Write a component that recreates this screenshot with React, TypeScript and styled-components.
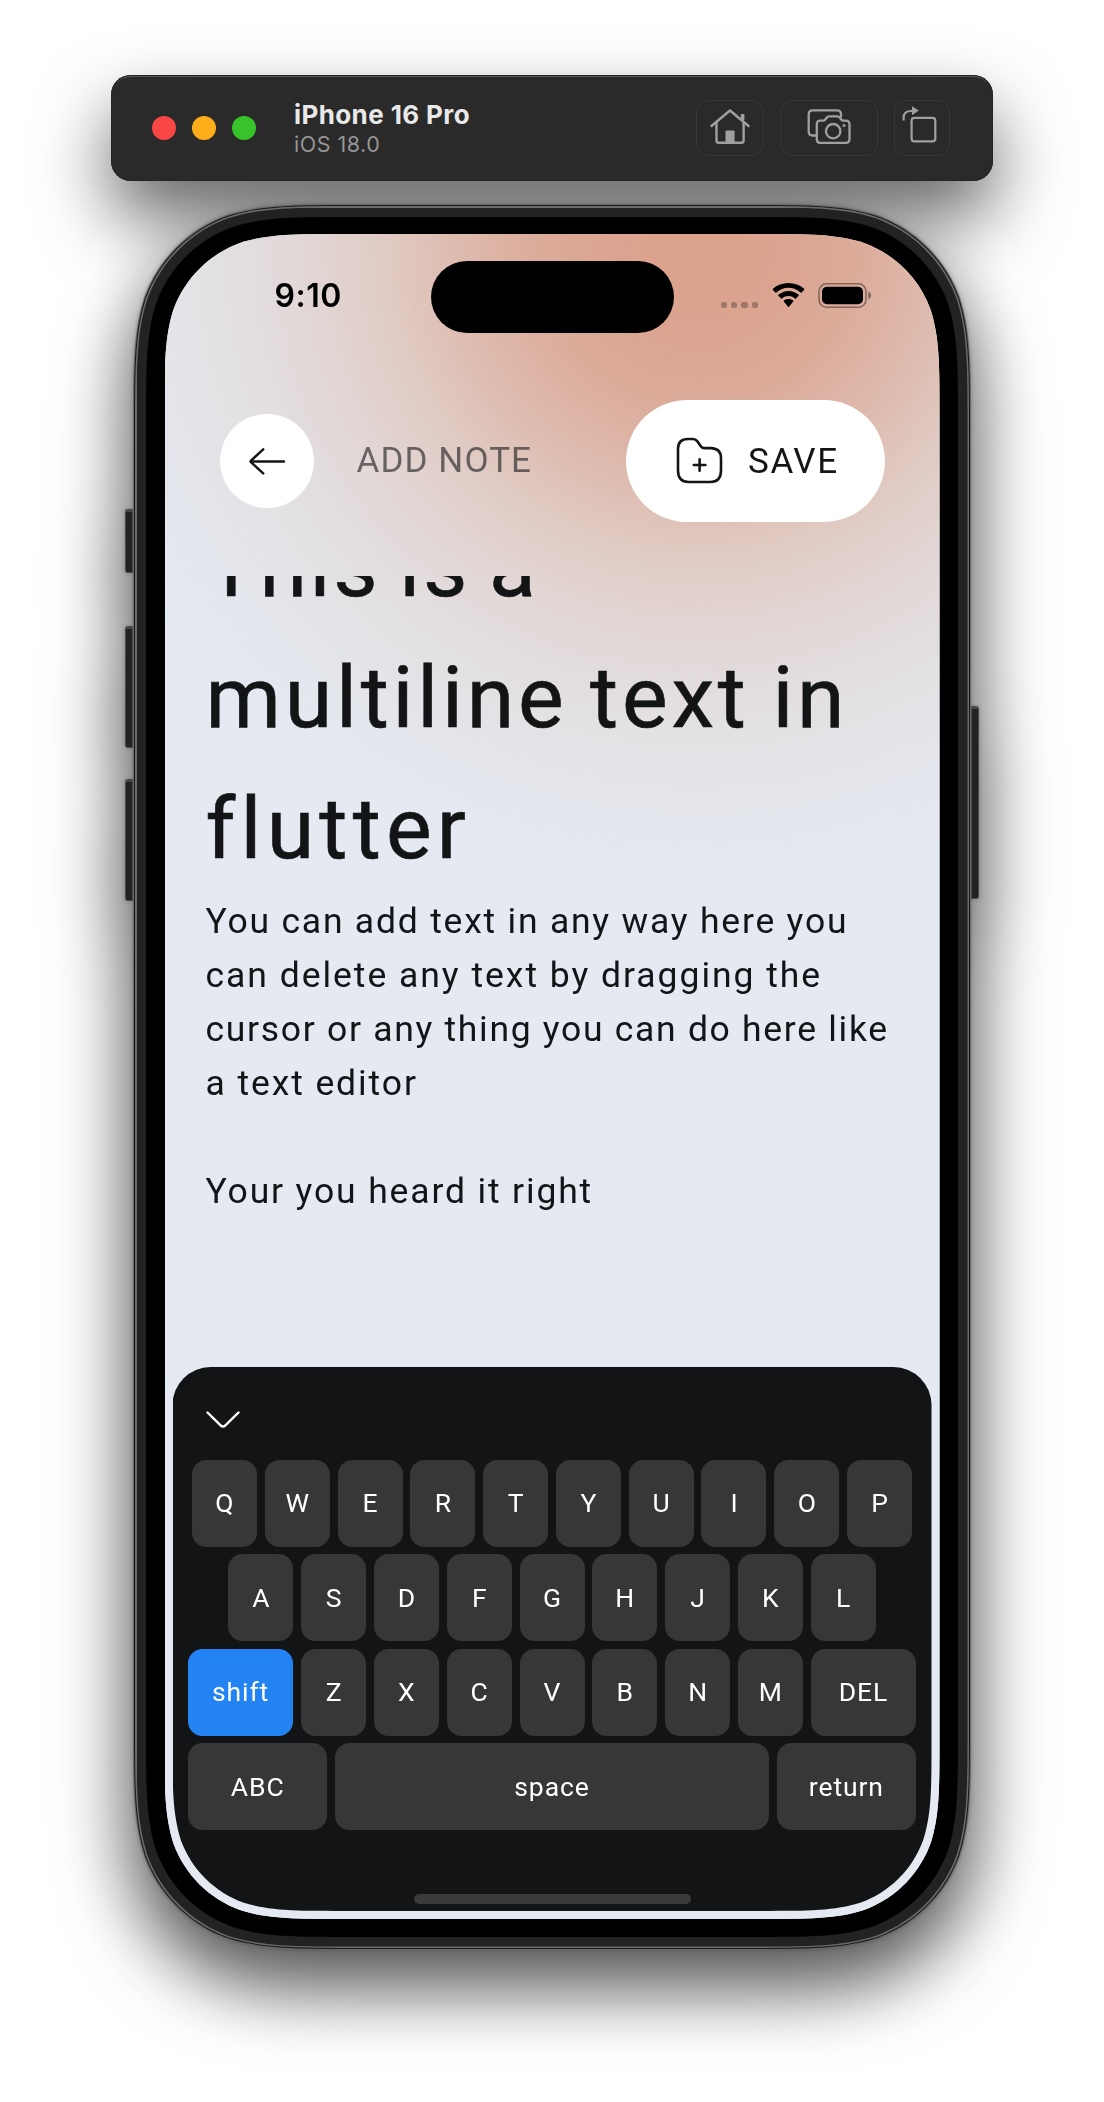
import React from "react";
import styled, { createGlobalStyle } from "styled-components";

const GlobalStyle = createGlobalStyle`
  *, *::before, *::after { box-sizing: border-box; }
  html, body { margin: 0; background: #fff; }
  body { font-family: Roboto, "Liberation Sans", sans-serif; overflow: hidden; }
  button { font: inherit; color: inherit; border: 0; padding: 0; margin: 0; background: none; }
`;

/* Outline with continuous-curvature corners; the top pair may be plain arcs. */
function smoothRect(w: number, h: number, r: number, topArc?: number) {
  const a = 1.528665 * r;
  const b = 1.088493 * r;
  const c = 0.868407 * r;
  const d = 0.631494 * r;
  const e = 0.074911 * r;
  const f = 0.372824 * r;
  const g = 0.16906 * r;
  const top = topArc
    ? `M${topArc} 0 L${w - topArc} 0 A${topArc} ${topArc} 0 0 1 ${w} ${topArc}`
    : `M${a} 0 L${w - a} 0 C${w - b} 0 ${w - c} 0 ${w - d} ${e} C${w - f} ${g} ${w - g} ${f} ${w - e} ${d} C${w} ${c} ${w} ${b} ${w} ${a}`;
  const bottom =
    `L${w} ${h - a} C${w} ${h - b} ${w} ${h - c} ${w - e} ${h - d} C${w - g} ${h - f} ${w - f} ${h - g} ${w - d} ${h - e} C${w - c} ${h} ${w - b} ${h} ${w - a} ${h}` +
    `L${a} ${h} C${b} ${h} ${c} ${h} ${d} ${h - e} C${f} ${h - g} ${g} ${h - f} ${e} ${h - d} C0 ${h - c} 0 ${h - b} 0 ${h - a}`;
  const left = topArc
    ? `L0 ${topArc} A${topArc} ${topArc} 0 0 1 ${topArc} 0 Z`
    : `L0 ${a} C0 ${b} 0 ${c} ${e} ${d} C${g} ${f} ${f} ${g} ${d} ${e} C${c} 0 ${b} 0 ${a} 0 Z`;
  return `path("${top} ${bottom} ${left}")`;
}

const Page = styled.main`
  width: 1104px;
  height: 2102px;
  padding-top: 75px;
  display: flex;
  flex-direction: column;
  align-items: center;
  background: #fff;
`;

/* The shadow stays beneath the device while the bar itself sits above the device's shadow. */
const TitleBarShadow = styled.div`
  width: 882px;
  border-radius: 20px;
  box-shadow: 0 36px 72px rgba(0, 0, 0, 0.6);
`;

const TitleBar = styled.header`
  position: relative;
  z-index: 1;
  height: 106px;
  padding: 0 43px 0 41px;
  display: flex;
  align-items: center;
  border-radius: 20px;
  background: #2a2a2a;
  box-shadow: inset 0 0 0 1px #242424, inset 0 3px 0 -1px #565656;
`;

const Lights = styled.div`
  display: flex;
  gap: 16px;
`;

const Light = styled.span<{ $color: string }>`
  width: 24px;
  height: 24px;
  border-radius: 50%;
  background: ${(p) => p.$color};
`;

const DeviceInfo = styled.div`
  margin-left: 38px;
  flex: 1;
  font-family: Inter, sans-serif;
`;

const DeviceName = styled.div`
  font-size: 26px;
  line-height: 32px;
  font-weight: 700;
  letter-spacing: 0.4px;
  color: #e9e9e9;
`;

const DeviceOs = styled.div`
  font-size: 21.5px;
  line-height: 26px;
  letter-spacing: 0.5px;
  color: #949494;
`;

const Tools = styled.div`
  display: flex;
  gap: 16px;
`;

const Tool = styled.button<{ $width: number }>`
  width: ${(p) => p.$width}px;
  height: 56px;
  display: grid;
  place-items: center;
  border: 1.5px solid #373737;
  border-radius: 12px;
`;

const Device = styled.section`
  margin-top: 23px;
  display: grid;
  grid-template-columns: 9px 838px 9px;
  filter: drop-shadow(0 34px 38px rgba(0, 0, 0, 0.62)) drop-shadow(0 0 2px rgba(0, 0, 0, 0.3));
`;

const Side = styled.div<{ $top: number }>`
  padding-top: ${(p) => p.$top}px;
  display: flex;
  flex-direction: column;
`;

const HardwareButton = styled.span<{ $height: number; $gap?: number; $right?: boolean }>`
  height: ${(p) => p.$height}px;
  width: 8px;
  margin-left: ${(p) => (p.$right ? 0 : 1)}px;
  margin-bottom: ${(p) => p.$gap ?? 0}px;
  background: #222;
  border: 1px solid #4a4a4a;
  border-top: 3px solid #484848;
  border-radius: ${(p) => (p.$right ? "0 3px 3px 0" : "3px 0 0 3px")};
`;

const Rim = styled.div`
  height: 1746px;
  padding: 1px;
  background: #686868;
  clip-path: ${smoothRect(838, 1746, 148)};
`;

const RimLine = styled.div`
  height: 1744px;
  padding: 1px;
  background: #191919;
  clip-path: ${smoothRect(836, 1744, 147)};
`;

const RimShine = styled.div`
  height: 1742px;
  padding: 1.5px;
  background: #6b6b6b;
  clip-path: ${smoothRect(834, 1742, 146)};
`;

const Band = styled.div`
  height: 1739px;
  padding: 9.5px 9.5px;
  background: #222;
  clip-path: ${smoothRect(831, 1739, 145)};
`;

const Bezel = styled.div`
  height: 1720px;
  padding: 17px 18px 18px 18.5px;
  background: #000;
  clip-path: ${smoothRect(812, 1720, 136)};
`;

const Screen = styled.div`
  height: 1685px;
  width: 775px;
  display: flex;
  flex-direction: column;
  clip-path: ${smoothRect(775, 1685, 119.5)};
  background: radial-gradient(
      circle 655px at 533px 10px,
      #dba28c 0%,
      #dba490 13%,
      #dcac9b 25%,
      #debbaf 37%,
      #e0cbc4 48%,
      #e2d7d6 60%,
      #e3e0e2 73%,
      #e4e6ec 86%,
      #e5e9f2 100%
    )
    #e5e9f2;
`;

const StatusBar = styled.div`
  padding-top: 27px;
  height: 99px;
  display: grid;
  grid-template-columns: 266px 243px 1fr;
  align-items: center;
`;

const Clock = styled.span`
  padding: 0 0 2px 110px;
  font: 600 32px/32px Inter, sans-serif;
  letter-spacing: 0.5px;
  color: #000;
`;

const Island = styled.div`
  height: 72px;
  border-radius: 36px;
  background: #000;
`;

const Indicators = styled.div`
  padding-left: 47px;
  height: 28px;
  padding-bottom: 3px;
  display: flex;
  align-items: flex-end;
`;

const Cellular = styled.div`
  display: flex;
  gap: 4.1px;
  span {
    width: 6.3px;
    height: 6.3px;
    border-radius: 2px;
    background: rgba(0, 0, 0, 0.27);
  }
`;

const WifiIcon = styled.svg`
  margin-left: 14px;
`;

const BatteryIcon = styled.svg`
  margin-left: 13px;
`;

const AppBar = styled.div`
  margin-top: 67px;
  height: 122px;
  padding: 0 55px;
  display: flex;
  align-items: center;
  font-size: 35px;
  color: #141517;
`;

const BackButton = styled.button`
  width: 94px;
  height: 94px;
  display: grid;
  place-items: center;
  border-radius: 50%;
  background: #fff;
`;

const BarTitle = styled.span`
  margin-left: 43px;
  padding-bottom: 1px;
  flex: 1;
  letter-spacing: 1.1px;
  color: rgba(20, 21, 23, 0.6);
`;

const SaveButton = styled.button`
  width: 259px;
  height: 122px;
  padding-left: 50px;
  display: flex;
  align-items: center;
  gap: 25.5px;
  border-radius: 61px;
  background: #fff;
  letter-spacing: 1.6px;
`;

const Editor = styled.article`
  margin-top: 54px;
  height: 790px;
  padding: 0 0 0 41px;
  overflow: hidden;
  white-space: nowrap;
  color: #131416;
`;

const NoteTitle = styled.h1`
  margin: -75px 0 0;
  font-size: 86px;
  line-height: 131px;
  font-weight: 400;
  -webkit-text-stroke: 0.6px #131416;
`;

const NoteBody = styled.p`
  margin: 1px 0 0;
  font-size: 35.5px;
  line-height: 53.9px;
`;

const Line = styled.span<{ $track: number; $gap?: number }>`
  display: block;
  min-height: 1lh;
  letter-spacing: ${(p) => p.$track}px;
  word-spacing: ${(p) => p.$gap ?? 0}px;
`;

const Keyboard = styled.div`
  margin: 1px 8px 0;
  height: 544px;
  width: 759px;
  display: flex;
  flex-direction: column;
  align-items: center;
  background: #131416;
  clip-path: ${smoothRect(759, 544, 112, 38)};
`;

const KeyboardToolbar = styled.div`
  width: 100%;
  height: 92.5px;
  padding: 42.5px 0 0 32px;
`;

const KeyRows = styled.div`
  width: 728.5px;
  display: flex;
  flex-direction: column;
  gap: 7.5px;
`;

const KeyRow = styled.div`
  display: flex;
  justify-content: center;
  gap: 7.8px;
`;

const Key = styled.button<{ $width: number; $active?: boolean }>`
  width: ${(p) => p.$width}px;
  height: 87px;
  padding-bottom: 1px;
  border-radius: 14.5px;
  background: ${(p) => (p.$active ? "#2483f3" : "#363739")};
  color: #fff;
  font-size: 26.5px;
  letter-spacing: ${(p) => (p.$width > 66 ? 0.9 : 0)}px;
`;

const HomeIndicator = styled.div`
  margin-top: 64px;
  width: 277px;
  height: 10px;
  border-radius: 5px;
  background: #3a3a3a;
`;

const HomeGlyph = () => (
  <svg width="42" height="38" viewBox="0 0 42 38" fill="none" stroke="#a0a0a0" strokeWidth="2.4" strokeLinecap="round" strokeLinejoin="round">
    <path d="M2.5 17 21 1.5 39.5 17" />
    <path d="M7.5 13.5V31.5Q7.5 33.8 9.8 33.8H32.3Q34.6 33.8 34.6 31.5V13.5" />
    <path d="M33.6 11V5" strokeWidth="3.6" strokeLinecap="butt" />
    <path d="M16.5 33.5V22.8Q16.5 21.6 17.7 21.6H24.4Q25.6 21.6 25.6 22.8V33.5Z" fill="#a0a0a0" stroke="none" />
  </svg>
);

const CameraGlyph = () => (
  <svg width="46" height="38" viewBox="0 0 46 38" fill="none" stroke="#a0a0a0" strokeWidth="2.3" strokeLinecap="round" strokeLinejoin="round">
    <path d="M9.5 26.5H6.7Q2.7 26.5 2.7 22.5V5.3Q2.7 1.3 6.7 1.3H31Q35 1.3 35 5.3V7.5" />
    <path d="M14 11.6H17.3Q18.5 11.6 19.3 10.5L20.8 8.5Q21.7 7.3 23.2 7.3H31.4Q32.9 7.3 33.8 8.5L35.2 10.5Q36 11.6 37.2 11.6H39.8Q43.5 11.6 43.5 15.2V30.2Q43.5 33.8 39.8 33.8H14Q10.8 33.8 10.8 30.2V15.2Q10.8 11.6 14 11.6Z" />
    <circle cx="27.2" cy="22.2" r="7.2" />
    <circle cx="38" cy="16.6" r="1.5" fill="#a0a0a0" stroke="none" />
  </svg>
);

const RotateGlyph = () => (
  <svg width="42" height="44" viewBox="0 0 42 44" fill="none" stroke="#a0a0a0" strokeWidth="2.2">
    <path d="M2.6 14.5V12Q2.6 5 10 5H11.5" />
    <path d="M11 .2 17.8 4.6 11 9.2Z" fill="#a0a0a0" stroke="none" />
    <rect x="10.6" y="11.8" width="23.7" height="23.5" rx="2.8" />
  </svg>
);

const ArrowGlyph = () => (
  <svg width="38" height="30" viewBox="0 0 38 30" fill="none" stroke="#141517" strokeWidth="2.5" strokeLinecap="round" strokeLinejoin="round">
    <path d="M36 15.4H2.5M15.2 3.4 3.2 14.4Q2.2 15.4 3.2 16.4L15.2 27.4" />
  </svg>
);

const FolderGlyph = () => (
  <svg width="47" height="48" viewBox="0 0 47 48" fill="none" stroke="#141517" strokeWidth="2.6" strokeLinecap="round" strokeLinejoin="round">
    <path d="M2 12Q2 2 12 2H17Q19.6 2 21.4 4.4L25 9.4Q26.2 11.1 28.6 11.1H35Q45 11.6 45 21V33.5Q45 45 34.5 45H12.5Q2 45 2 33.5Z" />
    <path d="M23.6 22.2V33.8M17.8 28H29.4" />
  </svg>
);

const ROW_TOP = "QWERTYUIOP".split("");
const ROW_MIDDLE = "ASDFGHJKL".split("");
const ROW_BOTTOM = "ZXCVBNM".split("");

export default function App() {
  return (
    <Page>
      <GlobalStyle />
      <TitleBarShadow>
        <TitleBar>
          <Lights>
            <Light $color="#fb4646" />
            <Light $color="#fdae18" />
            <Light $color="#39c32b" />
          </Lights>
          <DeviceInfo>
            <DeviceName>iPhone 16 Pro</DeviceName>
            <DeviceOs>iOS 18.0</DeviceOs>
          </DeviceInfo>
          <Tools>
            <Tool $width={68} aria-label="Home"><HomeGlyph /></Tool>
            <Tool $width={98} aria-label="Screenshot"><CameraGlyph /></Tool>
            <Tool $width={56} aria-label="Rotate"><RotateGlyph /></Tool>
          </Tools>
        </TitleBar>
      </TitleBarShadow>

      <Device>
        <Side $top={305}>
          <HardwareButton $height={64} $gap={53} />
          <HardwareButton $height={122} $gap={31} />
          <HardwareButton $height={122} />
        </Side>
        <Rim>
          <RimLine>
            <RimShine>
              <Band>
                <Bezel>
                  <Screen>
                    <StatusBar>
                      <Clock>9:10</Clock>
                      <Island />
                      <Indicators>
                        <Cellular><span /><span /><span /><span /></Cellular>
                        <WifiIcon width="33" height="25" viewBox="0 0 33 25" fill="#000">
                          <path d="M16.5 4.8C21.1 4.8 25.3 6.5 28.5 9.4Q29.1 9.9 29.6 9.4L32.2 6.8Q32.7 6.2 32.1 5.7C28 2.1 22.5 0 16.5 0S5 2.1.9 5.7Q.3 6.2.8 6.8L3.4 9.4Q3.9 9.9 4.5 9.4C7.7 6.5 11.9 4.8 16.5 4.8Z" />
                          <path d="M16.5 13.1C18.9 13.1 21.1 13.9 22.8 15.4Q23.4 15.9 23.9 15.4L26.6 12.7Q27.1 12.1 26.5 11.6C23.8 9.3 20.3 7.9 16.5 7.9S9.2 9.3 6.5 11.6Q5.9 12.1 6.4 12.7L9.1 15.4Q9.6 15.9 10.2 15.4C11.9 13.9 14.1 13.1 16.5 13.1Z" />
                          <path d="M21.2 18.4Q21.7 17.8 21.1 17.4C19.8 16.4 18.2 15.9 16.5 15.9S13.2 16.4 11.9 17.4Q11.3 17.8 11.8 18.4L16 23.7Q16.5 24.3 17 23.7Z" />
                        </WifiIcon>
                        <BatteryIcon width="54" height="25" viewBox="0 0 54 25" fill="none">
                          <rect x="1" y=".8" width="47" height="23.4" rx="7.6" stroke="#000" strokeOpacity=".4" strokeWidth="1.6" />
                          <rect x="4" y="3.8" width="41" height="17.4" rx="5" fill="#000" />
                          <path d="M50.4 8.6Q53 9.8 53 12.5T50.4 16.4Z" fill="#000" fillOpacity=".45" />
                        </BatteryIcon>
                      </Indicators>
                    </StatusBar>

                    <AppBar>
                      <BackButton aria-label="Back"><ArrowGlyph /></BackButton>
                      <BarTitle>ADD NOTE</BarTitle>
                      <SaveButton>
                        <FolderGlyph />
                        <span>SAVE</span>
                      </SaveButton>
                    </AppBar>

                    <Editor>
                      <NoteTitle>
                        <Line $track={2.7} $gap={-5}>This is a</Line>
                        <Line $track={3.8} $gap={-2.5}>multiline text in</Line>
                        <Line $track={5.2}>flutter</Line>
                      </NoteTitle>
                      <NoteBody>
                        <Line $track={1.78}>You can add text in any way here you</Line>
                        <Line $track={1.97}>can delete any text by dragging the</Line>
                        <Line $track={1.7}>cursor or any thing you can do here like</Line>
                        <Line $track={1.9}>a text editor</Line>
                        <Line $track={1.8} />
                        <Line $track={1.85}>Your you heard it right</Line>
                      </NoteBody>
                    </Editor>

                    <Keyboard>
                      <KeyboardToolbar>
                        <svg width="36" height="20" viewBox="0 0 36 20" fill="none" stroke="#fff" strokeWidth="2.4" strokeLinecap="round">
                          <path d="M2.5 2.5 15.6 15.3Q18 17.6 20.4 15.3L33.5 2.5" />
                        </svg>
                      </KeyboardToolbar>
                      <KeyRows>
                        <KeyRow>{ROW_TOP.map((k) => <Key key={k} $width={65}>{k}</Key>)}</KeyRow>
                        <KeyRow>{ROW_MIDDLE.map((k) => <Key key={k} $width={65}>{k}</Key>)}</KeyRow>
                        <KeyRow>
                          <Key $width={105.5} $active>shift</Key>
                          {ROW_BOTTOM.map((k) => <Key key={k} $width={65}>{k}</Key>)}
                          <Key $width={105.5}>DEL</Key>
                        </KeyRow>
                        <KeyRow>
                          <Key $width={139.5}>ABC</Key>
                          <Key $width={433.6}>space</Key>
                          <Key $width={139.5}>return</Key>
                        </KeyRow>
                      </KeyRows>
                      <HomeIndicator />
                    </Keyboard>
                  </Screen>
                </Bezel>
              </Band>
            </RimShine>
          </RimLine>
        </Rim>
        <Side $top={502}>
          <HardwareButton $height={193} $right />
        </Side>
      </Device>
    </Page>
  );
}
